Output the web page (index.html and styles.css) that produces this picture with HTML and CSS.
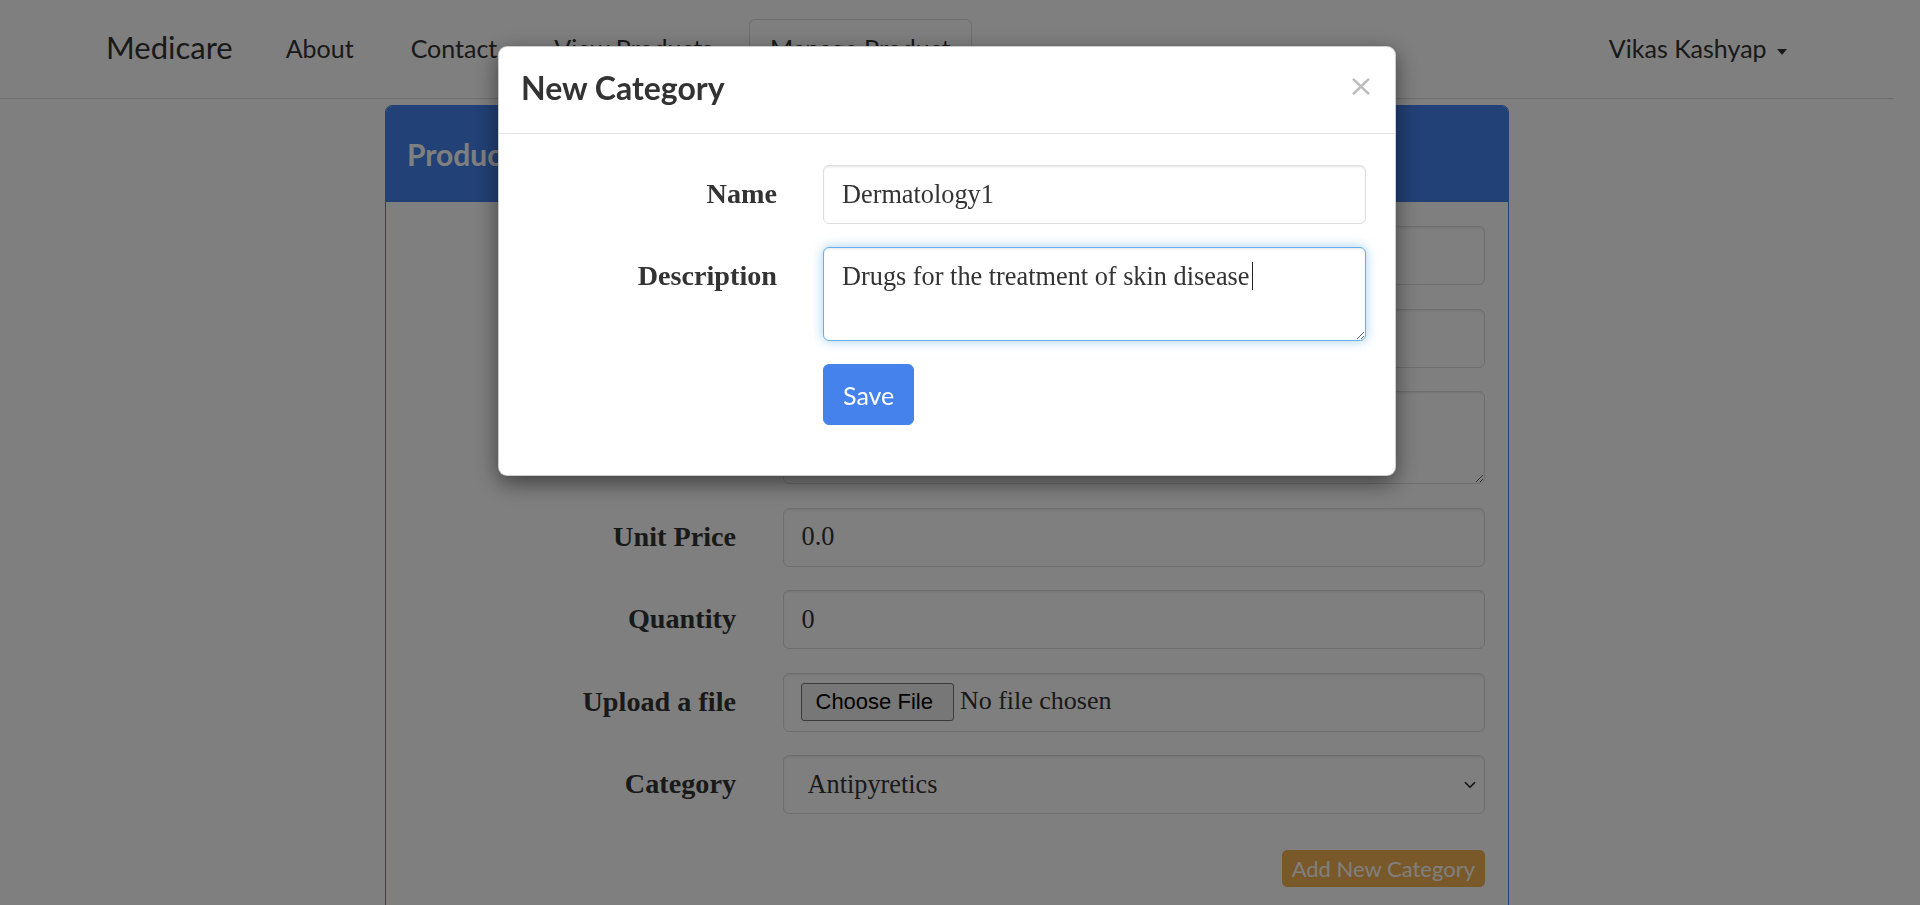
FILE: index.html
```html
<!DOCTYPE html>
<html lang="en">
<head>
<meta charset="utf-8">
<title>Medicare - Manage Product</title>
<link rel="stylesheet" href="styles.css">
</head>
<body>
<nav class="navbar">
  <div class="nav-inner">
    <a class="brand" href="#">Medicare</a>
    <ul class="nav-links">
      <li><a href="#">About</a></li>
      <li><a href="#">Contact</a></li>
      <li><a href="#">View Products</a></li>
      <li class="active"><a href="#">Manage Product</a></li>
    </ul>
    <div class="nav-user"><a href="#">Vikas Kashyap <span class="caret"></span></a></div>
  </div>
</nav>

<main class="page">
  <section class="panel">
    <div class="panel-heading"><h4 class="panel-title">Product Management</h4></div>
    <div class="panel-body">
      <form class="form-grid">
        <label class="form-label">Name</label>
        <input class="form-control" type="text" placeholder="">
        <label class="form-label">Brand</label>
        <input class="form-control" type="text" placeholder="">
        <label class="form-label">Description</label>
        <textarea class="form-control area" rows="3"></textarea>
        <label class="form-label">Unit Price</label>
        <input class="form-control" type="text" value="0.0">
        <label class="form-label">Quantity</label>
        <input class="form-control" type="text" value="0">
        <label class="form-label">Upload a file</label>
        <div class="form-control file-box"><input class="file-input" type="file"></div>
        <label class="form-label">Category</label>
        <div class="select-wrap">
          <select class="form-control select">
            <option>Antipyretics</option>
            <option>Analgesics</option>
            <option>Antibiotics</option>
          </select>
          <svg class="chevron" width="12" height="8" viewBox="0 0 12 8"><path d="M1 1.2 L6 6.2 L11 1.2" fill="none" stroke="#222" stroke-width="1.6"/></svg>
        </div>
        <div class="form-actions"><button type="button" class="btn btn-warning">Add New Category</button></div>
      </form>
    </div>
  </section>
</main>

<div class="modal-backdrop"></div>
<div class="modal">
  <div class="modal-dialog">
    <div class="modal-header">
      <h4 class="modal-title">New Category</h4>
      <button type="button" class="close" aria-label="Close">
        <svg width="18" height="17" viewBox="0 0 18 17"><path d="M1 0.8 L17 16.2 M17 0.8 L1 16.2" stroke="#bcbcbc" stroke-width="2.4" fill="none"/></svg>
      </button>
    </div>
    <div class="modal-body">
      <form class="modal-grid">
        <label class="form-label">Name</label>
        <input class="form-control" type="text" value="Dermatology1">
        <label class="form-label">Description</label>
        <div class="area-wrap">
          <textarea class="form-control modal-area focus">Drugs for the treatment of skin disease</textarea>
          <span class="text-caret"></span>
        </div>
        <span></span>
        <div><button type="button" class="btn btn-primary">Save</button></div>
      </form>
    </div>
  </div>
</div>
</body>
</html>
```

FILE: styles.css
```css
* { box-sizing: border-box; }

html, body { height: 100%; }

body {
  margin: 0;
  padding-right: 26px;
  background: #fff;
  color: #333;
  font-family: "Liberation Serif", "DejaVu Serif", serif;
  font-size: 26.3px;
  overflow: hidden;
}

a { text-decoration: none; color: inherit; }

/* ---------- navbar ---------- */
.navbar {
  background: #fff;
  border-bottom: 1px solid #ddd;
  height: 99px;
}
.nav-inner {
  display: flex;
  align-items: flex-start;
  padding: 19px 107px 0 106px;
  font-family: Lato, "Open Sans", sans-serif;
  color: #333;
}
.brand {
  display: block;
  width: 158.7px;
  font-size: 31px;
  line-height: 58px;
  margin-top: -1px;
}
.nav-links {
  display: flex;
  gap: 15px;
  list-style: none;
  margin: 0;
  padding: 0;
}
.nav-links a {
  display: block;
  padding: 0 20px 2px;
  line-height: 56px;
  font-size: 25px;
  border: 1px solid transparent;
  border-radius: 6px;
}
.nav-links .active a { border-color: #ddd; }
.nav-user {
  margin-left: auto;
  font-size: 25px;
  line-height: 56px;
  padding-top: 1px;
}
.caret {
  display: inline-block;
  width: 0;
  height: 0;
  margin-left: 4px;
  vertical-align: middle;
  border-top: 6px solid #333;
  border-left: 5px solid transparent;
  border-right: 5px solid transparent;
}

/* ---------- panel ---------- */
.page { padding-top: 6px; }
.panel {
  width: 1124px;
  margin: 0 auto;
  border: 1px solid #4582ec;
  border-radius: 7px;
  background: #fff;
}
.panel-heading {
  background: #4582ec;
  height: 96px;
  padding: 0 21px;
  border-radius: 6px 6px 0 0;
}
.panel-title {
  margin: 0;
  color: #fff;
  font-family: Lato, "Open Sans", sans-serif;
  font-weight: 700;
  font-size: 30px;
  line-height: 96px;
}
.panel-body { padding: 24px 23px 40px; }

.form-grid {
  display: grid;
  grid-template-columns: 327px 702.5px;
  column-gap: 46.5px;
  row-gap: 23.5px;
  align-items: start;
}

.form-label {
  justify-self: end;
  text-align: right;
  font-weight: 700;
  font-size: 28.2px;
  line-height: 58px;
  color: #333;
}

.form-control {
  display: block;
  width: 100%;
  height: 59px;
  margin: 0;
  padding: 0 18px;
  border: 1px solid #ddd;
  border-radius: 6px;
  background: #fff;
  color: #333;
  font-family: "Liberation Serif", "DejaVu Serif", serif;
  font-size: 26.3px;
  box-shadow: inset 0 1.5px 1.5px rgba(0,0,0,.075);
  outline: none;
}
.area {
  height: 93px;
  resize: vertical;
  padding: 10px 18px;
  line-height: 1.42857;
}
.file-box {
  display: flex;
  align-items: center;
  padding: 0 17px;
}
.file-input {
  font-family: "Liberation Serif", "DejaVu Serif", serif;
  font-size: 26px;
  color: #333;
}
.file-input::file-selector-button {
  font-family: "Liberation Sans", Arial, sans-serif;
  font-size: 22px;
  color: #000;
  background: #efefef;
  border: 1px solid #767676;
  border-radius: 3px;
  padding: 5px 20px 5px 14px;
  margin-right: 6px;
}
.select-wrap { position: relative; }
.select {
  appearance: none;
  -webkit-appearance: none;
  padding-left: 24px;
}
.chevron {
  position: absolute;
  right: 9px;
  top: 26px;
}
.form-actions {
  grid-column: 1 / -1;
  display: flex;
  justify-content: flex-end;
  margin-top: 12.5px;
}

.btn {
  display: inline-block;
  border: 1px solid transparent;
  font-family: Lato, "Open Sans", sans-serif;
  color: #fff;
  cursor: pointer;
}
.btn-warning {
  height: 37px;
  padding: 0 9px;
  font-size: 22px;
  background: #f2b152;
  border-color: #f2b152;
  border-radius: 5px;
}
.btn-primary {
  height: 61px;
  padding: 0 19px;
  font-size: 25px;
  background: #4582ec;
  border-color: #4582ec;
  border-radius: 6px;
}

/* ---------- modal ---------- */
.modal-backdrop {
  position: fixed;
  inset: 0;
  background: rgba(0,0,0,.5);
}
.modal {
  position: fixed;
  inset: 0;
  padding-right: 26px;
}
.modal-dialog {
  width: 898px;
  margin: 46px auto 0;
  background: #fff;
  border: 1px solid rgba(0,0,0,.2);
  border-radius: 9px;
  box-shadow: 0 7px 22px rgba(0,0,0,.5);
}
.modal-header {
  display: flex;
  justify-content: space-between;
  align-items: flex-start;
  height: 87px;
  padding: 0 25px 0 22px;
  border-bottom: 1px solid #e5e5e5;
}
.modal-title {
  margin: 0;
  padding-top: 23px;
  font-family: Lato, "Open Sans", sans-serif;
  font-weight: 700;
  font-size: 32px;
  line-height: 36px;
  color: #333;
}
.close {
  margin-top: 31px;
  padding: 0;
  border: 0;
  background: none;
  line-height: 0;
}
.modal-body { padding: 31px 29px 50px 30px; }
.modal-grid {
  display: grid;
  grid-template-columns: 248px 543px;
  column-gap: 46px;
  row-gap: 23px;
  align-items: start;
}
.area-wrap { position: relative; }
.modal-area {
  height: 94px;
  resize: vertical;
  padding: 10px 18px;
  line-height: 1.42857;
}
.text-caret {
  position: absolute;
  left: 429px;
  top: 15px;
  width: 1px;
  height: 28px;
  background: #222;
}
.focus {
  border-color: #66afe9;
  box-shadow: inset 0 1.5px 1.5px rgba(0,0,0,.075), 0 0 12px rgba(102,175,233,.6);
}
```
